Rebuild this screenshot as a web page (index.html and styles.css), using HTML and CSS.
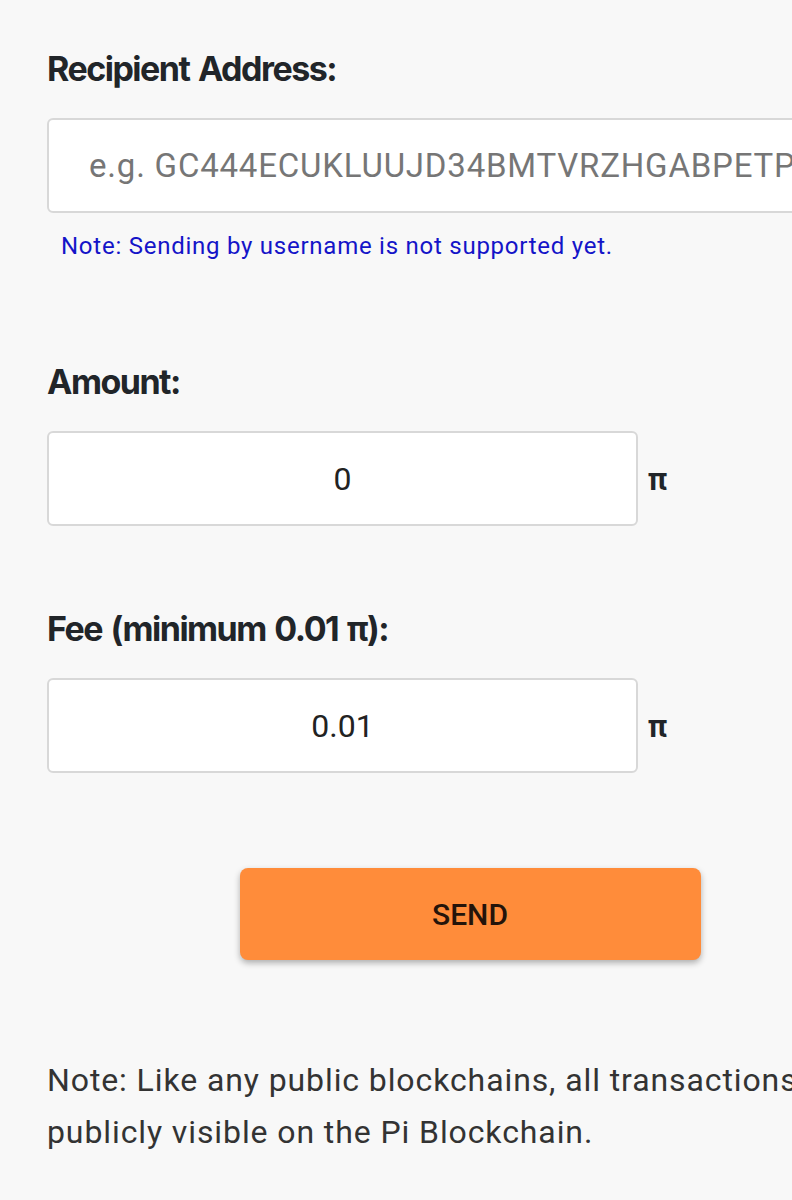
FILE: index.html
```html
<!DOCTYPE html>
<html lang="en">
<head>
    <meta charset="UTF-8">
    <meta name="viewport" content="width=device-width, initial-scale=1.0">
    <title>Send Pi</title>
    <link rel="stylesheet" href="styles.css">
</head>
<body>
    <div class="page">
        <form class="send-form">
            <!-- Recipient -->
            <div class="field">
                <label for="recipient">Recipient Address:</label>
                <input type="text" id="recipient" class="text-input" placeholder="e.g. GC444ECUKLUUJD34BMTVRZHGABPETPXXRB5Y6Q7QZL6T6GQXKZ">
                <p class="hint">Note: Sending by username is not supported yet.</p>
            </div>

            <!-- Amount -->
            <div class="field">
                <label for="amount">Amount:</label>
                <div class="amount-row">
                    <input type="text" id="amount" class="text-input number-input" value="0">
                    <span class="unit">π</span>
                </div>
            </div>

            <!-- Fee -->
            <div class="field">
                <label for="fee">Fee (minimum 0.01 π):</label>
                <div class="amount-row">
                    <input type="text" id="fee" class="text-input number-input" value="0.01">
                    <span class="unit">π</span>
                </div>
            </div>

            <div class="actions">
                <button type="button" class="send-btn">SEND</button>
            </div>

            <p class="disclaimer">Note: Like any public blockchains, all transactions are publicly visible on the Pi Blockchain.</p>
        </form>
    </div>
</body>
</html>
```

FILE: styles.css
```css
/* General Reset */
* {
    box-sizing: border-box;
    margin: 0;
    padding: 0;
}

html, body {
    width: 792px;
    overflow: hidden;
}

body {
    font-family: Roboto, "Liberation Sans", sans-serif;
    background-color: #f8f8f8;
    color: #333;
}

/* Page is wider than the phone crop */
.page {
    width: 940px;
    padding: 49px 47px 60px;
}

.field {
    margin-bottom: 83px;
}

.field label {
    display: block;
    font-family: Inter, "Liberation Sans", sans-serif;
    font-size: 34px;
    line-height: 40px;
    font-weight: 700;
    letter-spacing: -1.5px;
    word-spacing: 2px;
    color: #212529;
    margin-bottom: 29px;
}

.text-input {
    display: block;
    width: 100%;
    height: 95px;
    padding: 0 40px;
    background-color: #fff;
    border: 2px solid #d8d8d8;
    border-radius: 6px;
    font-family: Roboto, "Liberation Sans", sans-serif;
    font-size: 33px;
    letter-spacing: 0.8px;
    color: #222;
    outline: none;
}

.text-input::placeholder {
    color: #767676;
}

.hint {
    margin-top: 18px;
    padding: 0 0 18px 14px;
    font-size: 24px;
    line-height: 30px;
    letter-spacing: 0.75px;
    color: #1414c8;
}

/* Amount + fee rows */
.amount-row {
    display: flex;
    align-items: center;
    gap: 10px;
}

.number-input {
    width: 591px;
    text-align: center;
    font-size: 32px;
    letter-spacing: 0;
}

.unit {
    font-family: Inter, "Liberation Sans", sans-serif;
    font-size: 30px;
    font-weight: 700;
    color: #212529;
}

/* Send button */
.actions {
    display: flex;
    justify-content: center;
    margin-top: 95px;
}

.send-btn {
    width: 461px;
    height: 92px;
    background-color: #ff8c3a;
    color: #24140a;
    border: none;
    border-radius: 8px;
    font-family: Roboto, "Liberation Sans", sans-serif;
    font-size: 30px;
    font-weight: 500;
    box-shadow: 0 3px 6px rgba(0, 0, 0, 0.3);
    cursor: pointer;
}

.disclaimer {
    margin-top: 94px;
    font-size: 32px;
    line-height: 52px;
    letter-spacing: 0.9px;
    color: #333;
}
```
